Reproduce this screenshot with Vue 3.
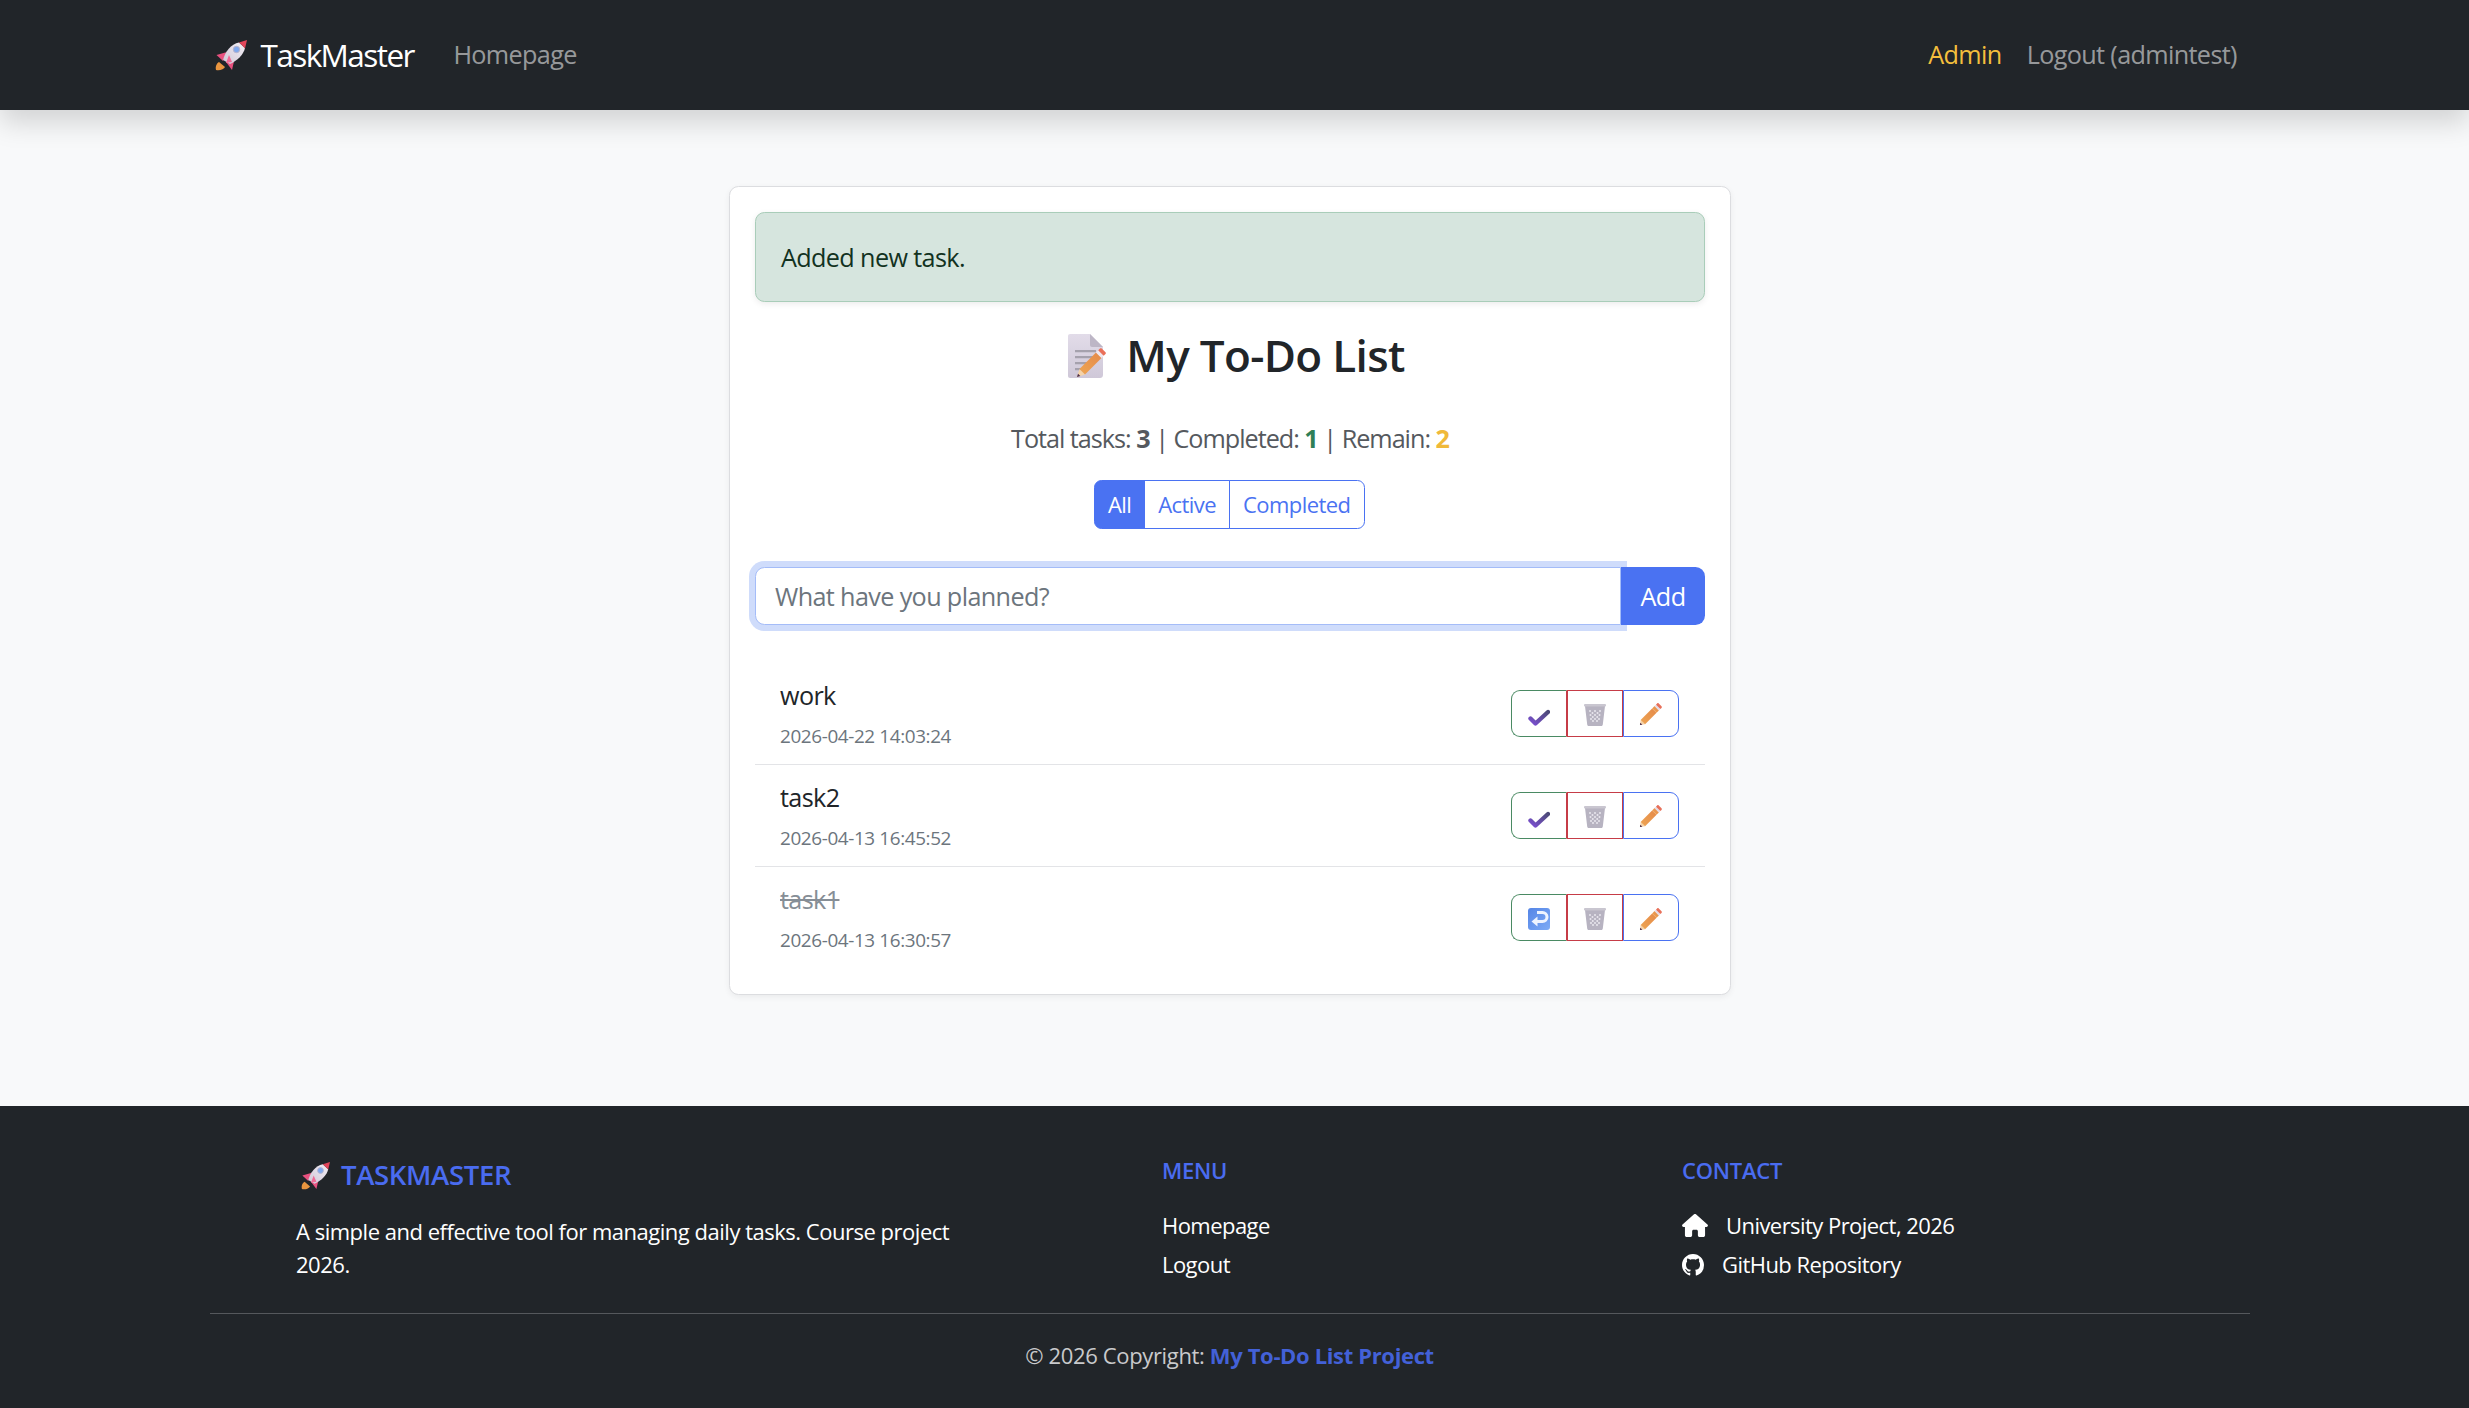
<script setup>
import { ref, computed } from 'vue';

const tasks = ref([
  { id: 3, title: 'work', created: '2026-04-22 14:03:24', done: false },
  { id: 2, title: 'task2', created: '2026-04-13 16:45:52', done: false },
  { id: 1, title: 'task1', created: '2026-04-13 16:30:57', done: true }
]);

const filters = ['All', 'Active', 'Completed'];
const activeFilter = ref('All');

const totalCount = computed(() => tasks.value.length);
const doneCount = computed(() => tasks.value.filter((t) => t.done).length);
const remainCount = computed(() => totalCount.value - doneCount.value);
</script>

<template>
  <div class="page">
    <nav class="navbar">
      <div class="container nav-inner">
        <a class="brand" href="#">
          <svg class="rocket" viewBox="0 0 32 32">
            <use href="#rocket-icon" />
          </svg>
          <span>TaskMaster</span>
        </a>
        <a class="nav-link" href="#">Homepage</a>
        <div class="nav-right">
          <a class="nav-link admin" href="#">Admin</a>
          <a class="nav-link" href="#">Logout (admintest)</a>
        </div>
      </div>
    </nav>

    <svg class="defs" width="0" height="0">
      <defs>
        <linearGradient id="rocket-body" x1="0" y1="1" x2="1" y2="0">
          <stop offset="0" stop-color="#cfc6d6" />
          <stop offset="1" stop-color="#f3eff5" />
        </linearGradient>
        <linearGradient id="check-grad" x1="0" y1="1" x2="1" y2="0">
          <stop offset="0" stop-color="#7a4fd0" />
          <stop offset="1" stop-color="#4d4a78" />
        </linearGradient>
        <linearGradient id="pencil-grad" x1="0" y1="1" x2="1" y2="0">
          <stop offset="0" stop-color="#eea552" />
          <stop offset="1" stop-color="#e58a4a" />
        </linearGradient>
        <linearGradient id="return-grad" x1="0" y1="0" x2="1" y2="1">
          <stop offset="0" stop-color="#5585e6" />
          <stop offset="1" stop-color="#7dabf6" />
        </linearGradient>
        <linearGradient id="memo-grad" x1="0" y1="0" x2="0" y2="1">
          <stop offset="0" stop-color="#e2dce9" />
          <stop offset="1" stop-color="#cfc8d8" />
        </linearGradient>
        <g id="rocket-icon">
          <path d="M1 31C0 27 2 24 4 23l6 5c-1 2-5 4-9 3z" fill="#e9953f" />
          <path d="M1.500 16L12 13 8 22z" fill="#e8517f" />
          <path d="M17 31l3-13-9 5z" fill="#e8517f" />
          <path d="M24 3.500C16 5 10 13 8 21l7 4c7-3 14-10 15-16z" fill="url(#rocket-body)" />
          <path d="M24 3.500L32 1l-2 8.500C28 7 26 5 24 3.500z" fill="#e2455a" />
          <path d="M11 24l3-8 3 7z" fill="#f06a95" />
          <circle cx="21.500" cy="10.500" r="3.200" fill="#7fa8ee" stroke="#b9b4cc" stroke-width="1" />
        </g>
        <g id="pencil-icon">
          <path d="M1 23l.7-5.300 4.600 4.600z" fill="#f5d3a8" />
          <path d="M1 23l.3-2.500 2.200 2.200z" fill="#4a2b4a" />
          <path d="M1.700 17.700L13.700 5.700l4.600 4.600-12 12z" fill="url(#pencil-grad)" />
          <path d="M13.700 5.700l2.500-2.500 4.600 4.600-2.500 2.500z" fill="url(#pencil-grad)" />
          <path d="M16.200 3.200l1.500-1.500 4.600 4.600-1.500 1.500z" fill="#e3dbe6" />
          <path d="M17.700 1.700l1.200-1.200c.5-.5 1.200-.5 1.700 0l2.900 2.900c.5.5.5 1.200 0 1.700l-1.200 1.200z" fill="#e8705a" />
        </g>
      </defs>
    </svg>

    <main class="content">
      <div class="card">
        <div class="alert">Added new task.</div>

        <h1 class="title">
          <svg class="memo" viewBox="0 0 39 44">
            <path d="M2 0h20l13 13v28c0 1.700-1.300 3-3 3H2c-1.100 0-2-.9-2-2V2C0 .9.9 0 2 0z" fill="url(#memo-grad)" />
            <path d="M22 0l13 13H24c-1.100 0-2-.9-2-2z" fill="#bdb6c6" />
            <path d="M7 16h21v2.200H7zM7 22h20v2.200H7zM7 28h13v2.200H7zM7 34h8v2.200H7z" fill="#a5a1ad" />
            <path d="M9 43l2.500-8 5.500 5.500z" fill="#f5d3a8" />
            <path d="M9 43l1-3.200 2.300 2.300z" fill="#4a2b4a" />
            <path d="M11.500 35L28 18.500l5.500 5.500L17 40.500z" fill="url(#pencil-grad)" />
            <path d="M28 18.500l2.200-2.200 5.500 5.500-2.200 2.200z" fill="#f0e8ee" />
            <path d="M30.200 16.300l1.800-1.800c.5-.5 1.200-.5 1.700 0l3.800 3.800c.5.5.5 1.200 0 1.700l-1.800 1.800z" fill="#ea7059" />
          </svg>
          <span>My To-Do List</span>
        </h1>

        <p class="stats">
          Total tasks: <b>{{ totalCount }}</b> | Completed:
          <b class="green">{{ doneCount }}</b> | Remain:
          <b class="yellow">{{ remainCount }}</b>
        </p>

        <div class="filters">
          <button
            v-for="f in filters"
            :key="f"
            class="filter-btn"
            :class="{ active: activeFilter === f }"
            @click="activeFilter = f"
          >
            {{ f }}
          </button>
        </div>

        <form class="add-form" @submit.prevent>
          <input class="add-input" type="text" placeholder="What have you planned?" />
          <button class="add-btn" type="submit">Add</button>
        </form>

        <ul class="task-list">
          <li v-for="task in tasks" :key="task.id" class="task-row">
            <div class="task-text">
              <div class="task-title" :class="{ done: task.done }">{{ task.title }}</div>
              <div class="task-date">{{ task.created }}</div>
            </div>
            <div class="task-actions">
              <button class="act act-green">
                <svg v-if="task.done" class="icon" viewBox="0 0 22 22">
                  <rect width="22" height="22" rx="3" fill="url(#return-grad)" />
                  <path d="M9 4.500h5.500a4.500 4.500 0 0 1 0 9H8" fill="none" stroke="#eef4ff" stroke-width="3" />
                  <path d="M9.500 8.500L3.500 13.500l6 5z" fill="#eef4ff" />
                </svg>
                <svg v-else class="icon" viewBox="0 0 22 22">
                  <path d="M2.500 14.500l5 5L20 8" fill="none" stroke="url(#check-grad)" stroke-width="4.400" stroke-linecap="round" stroke-linejoin="round" />
                </svg>
              </button>
              <button class="act act-red">
                <svg class="icon" viewBox="0 0 22 22">
                  <path d="M1 2h20l-2.200 18.500c-.1.900-.6 1.500-1.400 1.500H4.600c-.8 0-1.300-.6-1.400-1.500z" fill="#b7b3c1" />
                  <rect width="22" height="2.600" rx="1" fill="#c9c6d0" />
                  <path d="M6 7v.1M11 7v.1M16 7v.1M6.500 11v.1M11 11v.1M15.500 11v.1M7 15v.1M11 15v.1M15 15v.1M8.500 9v.1M13.500 9v.1M8.800 13v.1M13.200 13v.1M9 17v.1M13 17v.1" stroke="#e9e7ee" stroke-width="2" stroke-linecap="round" />
                </svg>
              </button>
              <button class="act act-blue">
                <svg class="icon pencil" viewBox="0 0 24 24"><use href="#pencil-icon" /></svg>
              </button>
            </div>
          </li>
        </ul>
      </div>
    </main>

    <footer class="footer">
      <div class="container">
        <div class="footer-cols">
          <div class="footer-about">
            <h2 class="footer-brand">
              <svg class="rocket small" viewBox="0 0 32 32"><use href="#rocket-icon" /></svg>
              <span>TASKMASTER</span>
            </h2>
            <p>A simple and effective tool for managing daily tasks. Course project 2026.</p>
          </div>
          <div>
            <h3 class="footer-head">MENU</h3>
            <a class="footer-link" href="#">Homepage</a>
            <a class="footer-link" href="#">Logout</a>
          </div>
          <div>
            <h3 class="footer-head">CONTACT</h3>
            <div class="footer-link">
              <svg class="home-icon" viewBox="0 0 576 512" fill="#fff">
                <path d="M575.800 255.500c0 18-15 32.100-32 32.100h-32l.7 160.200c0 2.700-.2 5.400-.5 8.100V472c0 22.100-17.900 40-40 40H456c-1.100 0-2.200 0-3.300-.1-1.400.1-2.800.1-4.200.1H416 392c-22.100 0-40-17.900-40-40V448 384c0-17.700-14.300-32-32-32H256c-17.700 0-32 14.300-32 32v64 24c0 22.100-17.900 40-40 40H160 128.100c-1.500 0-3-.1-4.500-.2-1.200.1-2.400.2-3.600.2H104c-22.100 0-40-17.900-40-40V360c0-.9 0-1.900.1-2.800V287.600H32c-18 0-32-14-32-32.100 0-9 3-17 10-24L266.400 8c7-7 15-8 22-8s15 2 21 7L564.800 231.500c8 7 12 15 11 24z" />
              </svg>
              <span>University Project, 2026</span>
            </div>
            <a class="footer-link" href="#">
              <svg class="gh-icon" viewBox="0 0 16 16" fill="#fff">
                <path d="M8 0C3.580 0 0 3.580 0 8c0 3.540 2.290 6.530 5.470 7.590.4.070.55-.17.55-.38 0-.19-.01-.82-.01-1.490-2.010.37-2.530-.49-2.690-.94-.09-.23-.48-.94-.82-1.130-.28-.15-.68-.52-.01-.53.63-.01 1.080.58 1.230.82.720 1.210 1.870.87 2.330.66.070-.52.280-.87.510-1.070-1.780-.2-3.640-.89-3.640-3.950 0-.87.310-1.590.82-2.150-.08-.2-.36-1.020.08-2.120 0 0 .67-.21 2.200.82.640-.18 1.320-.27 2-.27s1.360.09 2 .27c1.530-1.040 2.200-.82 2.200-.82.440 1.100.16 1.920.08 2.120.51.560.82 1.270.82 2.150 0 3.070-1.870 3.750-3.650 3.950.29.250.54.730.54 1.480 0 1.070-.01 1.930-.01 2.200 0 .21.150.46.550.38A8.010 8.010 0 0 0 16 8c0-4.420-3.580-8-8-8z" />
              </svg>
              <span>GitHub Repository</span>
            </a>
          </div>
        </div>
        <hr class="footer-line" />
        <div class="copyright">
          © 2026 Copyright: <a href="#">My To-Do List Project</a>
        </div>
      </div>
    </footer>
  </div>
</template>

<style scoped>
.page {
  min-height: 1408px;
  display: flex;
  flex-direction: column;
  background: #f8f9fa;
  font-family: "Open Sans", "Noto Sans", sans-serif;
  font-size: 25.2px;
  letter-spacing: -0.025em;
  line-height: 1.5;
  color: #212529;
}

a {
  text-decoration: none;
}

.defs {
  position: absolute;
}

/* the original page reserves a 9px gutter on the right */
.container {
  width: 2040px;
  margin-left: 209.5px;
}

.navbar {
  height: 110px;
  flex: none;
  background: #212529;
  box-shadow: 0 12.6px 25.2px rgba(0, 0, 0, 0.15);
  position: relative;
}

.nav-inner {
  height: 100%;
  display: flex;
  align-items: center;
}

.brand {
  display: flex;
  align-items: center;
  color: #fff;
  font-size: 31.5px;
  letter-spacing: -0.05em;
  margin-right: 27px;
}

.rocket {
  width: 32px;
  height: 32px;
  margin-left: 5px;
  margin-right: 14px;
}

.nav-link {
  color: rgba(255, 255, 255, 0.55);
  padding: 0 12.6px;
}

.nav-right {
  margin-left: auto;
  display: flex;
}

.admin {
  color: #f4bf3d;
}

.content {
  flex: 1;
  padding-top: 76px;
  padding-left: 729px;
}

.card {
  width: 1002px;
  box-sizing: border-box;
  padding: 25px;
  background: #fff;
  border: 1.5px solid #dcdde0;
  border-radius: 9.5px;
  box-shadow: 0 2px 6px rgba(0, 0, 0, 0.06);
}

.alert {
  height: 90px;
  box-sizing: border-box;
  padding: 2px 25px 0;
  display: flex;
  align-items: center;
  background: #d6e5de;
  border: 1.5px solid #a9cdb9;
  border-radius: 9.5px;
  box-shadow: 0 2px 6px rgba(0, 0, 0, 0.08);
  color: #12321f;
}

.title {
  margin: 32px 0 0;
  height: 44px;
  padding-left: 13px;
  display: flex;
  justify-content: center;
  align-items: center;
  gap: 19px;
  font-size: 44px;
  font-weight: 600;
  line-height: 44px;
  letter-spacing: -0.015em;
}

.title span {
  padding-bottom: 3px;
}

.memo {
  width: 39px;
  height: 44px;
}

.stats {
  margin: 41.500px 0 0;
  text-align: center;
  color: #55595e;
  letter-spacing: -0.04em;
}

.stats b {
  font-weight: 700;
}

.green {
  color: #2f7f57;
}

.yellow {
  color: #f0b93a;
}

.filters {
  margin-top: 23px;
  display: flex;
  justify-content: center;
}

.filter-btn {
  height: 48.500px;
  padding: 0 13.200px 1px;
  background: #fff;
  border: 1.5px solid #4a72f2;
  margin-left: -1.5px;
  color: #4a72f2;
  font-family: inherit;
  font-size: 22px;
  letter-spacing: -0.025em;
}

.filter-btn:first-child {
  border-radius: 7.5px 0 0 7.5px;
}

.filter-btn:last-child {
  border-radius: 0 7.5px 7.5px 0;
}

.filter-btn.active {
  background: #4a72f2;
  color: #fff;
}

.add-form {
  margin-top: 38px;
  display: flex;
  height: 58px;
}

.add-input {
  flex: 1;
  min-width: 0;
  box-sizing: border-box;
  padding: 0 19px;
  border: 1.5px solid #a4bcf8;
  border-radius: 9.5px 0 0 9.5px;
  box-shadow: 0 0 0 6px #cfdcfb;
  outline: none;
  font-family: inherit;
  font-size: inherit;
  letter-spacing: inherit;
}

.add-input::placeholder {
  color: #6c757d;
  opacity: 1;
}

.add-btn {
  position: relative;
  width: 84px;
  border: none;
  border-radius: 0 9.5px 9.5px 0;
  background: #4a72f2;
  color: #fff;
  font-family: inherit;
  font-size: inherit;
  letter-spacing: inherit;
}

.task-list {
  list-style: none;
  margin: 38px 0 0;
  padding: 0;
}

.task-row {
  height: 102px;
  box-sizing: border-box;
  padding: 0 26.500px 0 25px;
  display: flex;
  align-items: center;
  justify-content: space-between;
  border-bottom: 1.5px solid #e3e4e7;
}

.task-row:last-child {
  border-bottom: none;
}

.task-title.done {
  text-decoration: line-through;
  color: #868e96;
}

.task-date {
  margin-top: 7px;
  font-size: 18.9px;
  line-height: 28px;
  color: #6c757d;
  letter-spacing: -0.02em;
}

.task-actions {
  display: flex;
}

.act {
  width: 56px;
  height: 47px;
  padding: 3px 0 0;
  background: #fff;
  border: 1.5px solid;
  display: flex;
  align-items: center;
  justify-content: center;
}

.act-green {
  border-color: #4a8a63 #c63c47 #4a8a63 #4a8a63;
  border-radius: 9px 0 0 9px;
}

.act-red {
  border-color: #c63c47;
}

.act-blue {
  border-color: #4a72f2;
  border-radius: 0 9px 9px 0;
}

.icon {
  width: 22px;
  height: 22px;
}

.icon.pencil {
  width: 23px;
  height: 23px;
}

.footer {
  height: 302px;
  flex: none;
  background: #212529;
  color: #fff;
}

.footer-cols {
  height: 207px;
  box-sizing: border-box;
  padding: 45px 0 0 86.500px;
  display: grid;
  grid-template-columns: 866px 520px 1fr;
  font-size: 22px;
  letter-spacing: -0.025em;
}

.footer-brand {
  margin: 0 0 16px;
  display: flex;
  align-items: center;
  font-size: 27.5px;
  font-weight: 600;
  line-height: 48px;
  letter-spacing: -0.012em;
  color: #4a6cf0;
}

.rocket.small {
  width: 29px;
  height: 29px;
  margin-right: 11px;
}

.footer-about p {
  margin: 0;
  width: 680px;
  line-height: 33px;
  letter-spacing: -0.022em;
}

.footer-head {
  margin: 0 0 17px;
  font-size: 22px;
  font-weight: 600;
  line-height: 38px;
  letter-spacing: -0.01em;
  color: #4a6cf0;
}

.footer-link {
  display: flex;
  align-items: center;
  gap: 18px;
  height: 39px;
  color: #fff;
}

.home-icon {
  width: 26px;
  height: 23px;
}

.gh-icon {
  width: 22px;
  height: 22px;
}

.footer-line {
  margin: 0;
  border: none;
  border-top: 1.5px solid #55585c;
}

.copyright {
  margin-top: 25px;
  text-align: center;
  font-size: 22px;
  letter-spacing: -0.016em;
  color: #c9cacc;
}

.copyright a {
  color: #4361d8;
  font-weight: 700;
}
</style>

<style>
html, body {
  margin: 0;
}
</style>
